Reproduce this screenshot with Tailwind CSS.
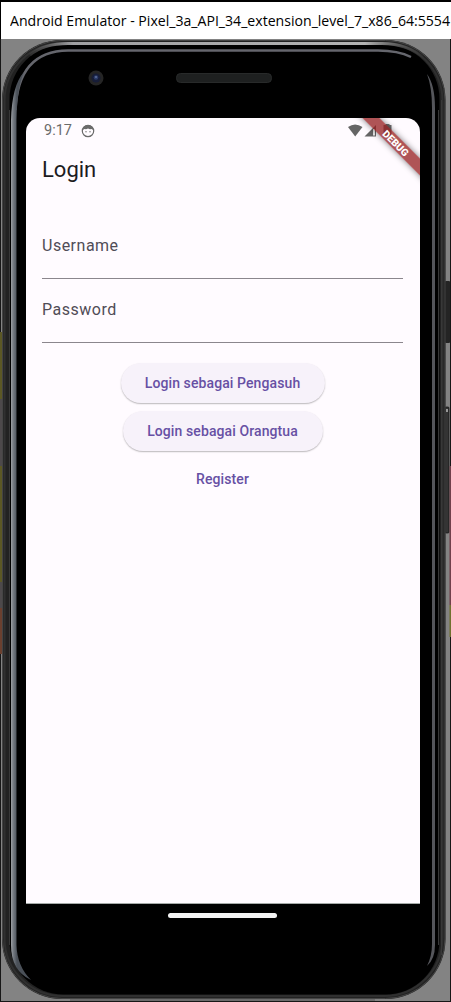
<!DOCTYPE html>
<html lang="id">
<head>
<meta charset="utf-8">
<title>Login</title>
<script src="https://cdn.jsdelivr.net/npm/@tailwindcss/browser@4"></script>
</head>
<body class="bg-[#838383]">
<div class="relative isolate flex h-[1002px] w-[451px] flex-col overflow-hidden bg-[#838383] font-[Roboto,sans-serif]">
  <!-- device body -->
  <svg class="absolute inset-0 -z-10" width="451" height="1002" viewBox="0 0 451 1002" fill="none">
    <defs>
      <linearGradient id="top" gradientUnits="userSpaceOnUse" x1="25" y1="0" x2="425" y2="0"><stop stop-color="#888" stop-opacity="0"/><stop offset=".12" stop-color="#a0a0a3"/><stop offset=".85" stop-color="#b4b4b4"/><stop offset="1" stop-color="#777" stop-opacity="0"/></linearGradient>
      <linearGradient id="left" gradientUnits="userSpaceOnUse" x1="11" y1="0" x2="17" y2="0"><stop stop-color="#9da0a4"/><stop offset=".4" stop-color="#747a81"/><stop offset="1" stop-color="#4a5058"/></linearGradient>
    </defs>
    <rect x="445" y="281" width="5" height="62" rx="1" fill="#242424"/>
    <rect x="445" y="407" width="4" height="126" rx="1" fill="#343434" stroke="#111" stroke-width=".7"/>
    <path d="M446 409h2v3h-2z" fill="#999"/>
    <rect x="2" y="40" width="443.500" height="959" rx="60" fill="#222"/>
    <rect x="2.500" y="40.500" width="442.500" height="958" rx="59.500" stroke="#454545"/>
    <rect x="4.500" y="43" width="438" height="953" rx="58" stroke="#303030" stroke-width="2"/>
    <rect x="9.500" y="45" width="430" height="949.500" rx="54" fill="#000"/>
    <path d="M30 55Q44 43.500 68 43.500H382Q408 44 424 58" stroke="url(#top)" stroke-width="3"/>
    <path d="M15.500 110Q18 51 68 50.500H378Q398 50.500 411 57" stroke="#65666d" stroke-width="2.500"/>
    <path d="M11 120Q12 85 24 72Q17 88 16.500 120V945Q17 966 31 980Q11 971 11 945Z" fill="url(#left)"/>
    <path d="M427 74Q435 85 435 108V945Q435 959 427 966Q432 956 432 944V108Q432 87 427 74Z" fill="#55565b"/>
    <path d="M9.500 110V945M438.500 110V945M441.500 100V955" stroke="#383838"/>
    <path d="M70 1000H375" stroke="#555"/>
    <path d="M0 1001.500H451M.5 39V1002M450.500 39V1002" stroke="#171717"/>
    <path d="M0 332h2v67H0zM0 466h2v116H0z" fill="#5c5825"/>
    <path d="M0 399h2v67H0zM0 582h2v26H0z" fill="#4d494b"/>
    <path d="M0 608h2v46H0z" fill="#6b402f"/>
    <path d="M449.500 466h1.500v139h-1.500z" fill="#70404b"/>
    <path d="M449.500 605h1.500v32h-1.500z" fill="#70702f"/>
    <circle cx="96" cy="78" r="7.500" fill="#252525"/><circle cx="96" cy="78" r="4.500" fill="#171d38"/><circle cx="96" cy="77.500" r="2.300" fill="#2b3b68"/><circle cx="96" cy="77" r=".8" fill="#8491bb"/>
    <rect x="176.500" y="73.500" width="95" height="9" rx="4" fill="#1e2020" stroke="#282a2a"/>
  </svg>

  <div class="flex h-[39px] shrink-0 items-center border-t-2 border-l border-black bg-white pl-[9px] whitespace-nowrap">
    <svg width="441" height="30" viewBox="0 0 441 30"><text x="0" y="20" textLength="440" lengthAdjust="spacingAndGlyphs" font-family="Open Sans, sans-serif" font-size="15" fill="#000">Android Emulator - Pixel_3a_API_34_extension_level_7_x86_64:5554</text></svg>
  </div>

  <main class="relative mt-[79px] ml-[26px] flex h-[786px] w-[394px] shrink-0 flex-col overflow-hidden rounded-t-[14px] border-b border-[#a5aaa8] bg-[#fffbff]">
    <div class="flex h-[25px] items-center pl-[18px] text-[#6b6b6b]">
      <span class="w-[37px] text-[14.500px]">9:17</span>
      <svg width="14" height="14" viewBox="0 0 14 14" fill="none"><circle cx="7" cy="7" r="5.700" stroke="currentColor" stroke-width="1.200"/><path d="M1.500 6Q2.500 1 7 1T12.500 6L10.500 5L9 5.300L7 4.600L5 5.300L3.500 5Z" fill="currentColor"/><circle cx="5" cy="7.800" r=".7" fill="currentColor"/><circle cx="9" cy="7.800" r=".7" fill="currentColor"/></svg>
      <svg class="relative z-10 ml-[253px]" width="46" height="14" viewBox="0 0 46 14" fill="#656565"><path d="M0 3Q7-2 14.500 3L7.200 12.500Z"/><path d="M16.500 12.500L28 1V12.500Z"/><path d="M25 5h2v6.500h-2z" fill="#eee"/><path d="M37.500 1V0h4v1h2v12h-8V1z" fill="#222" fill-opacity=".65"/></svg>
    </div>
    <h1 class="mt-3 ml-4 text-[22px] leading-[30px] text-[#1c1b1f]">Login</h1>
    <form class="mt-[37px] flex flex-col pr-[17px] pl-4 text-[16px] tracking-[0.500px] text-[#504c56]">
      <label class="h-[57px] border-b border-[#8b868d] pt-[12px] leading-6">Username</label>
      <label class="mt-[7px] h-[57px] border-b border-[#8b868d] pt-[12px] leading-6">Password</label>
    </form>
    <div class="mt-5 -ml-px flex flex-col items-center gap-2 text-[14px] font-medium tracking-[0.100px] text-[#6750a4]">
      <button class="h-10 w-[204px] rounded-full bg-[#f7f2fa] shadow-[0_1px_1.5px_#00000045]">Login sebagai Pengasuh</button>
      <button class="h-10 w-[200px] rounded-full bg-[#f7f2fa] shadow-[0_1px_1.5px_#00000045]">Login sebagai Orangtua</button>
      <button class="h-10 px-3">Register</button>
    </div>
    <div class="absolute top-[19px] left-[310px] z-20 flex h-[12px] w-[120px] rotate-45 items-center justify-center bg-[#941c1e]/75 text-[10px] font-black text-white shadow-[0_0_6px_#0000007f]">DEBUG</div>
  </main>
  <div class="mt-[9px] ml-[168px] h-[5px] w-[109px] shrink-0 rounded-full bg-[#f3f3f3]"></div>
</div>
</body>
</html>
